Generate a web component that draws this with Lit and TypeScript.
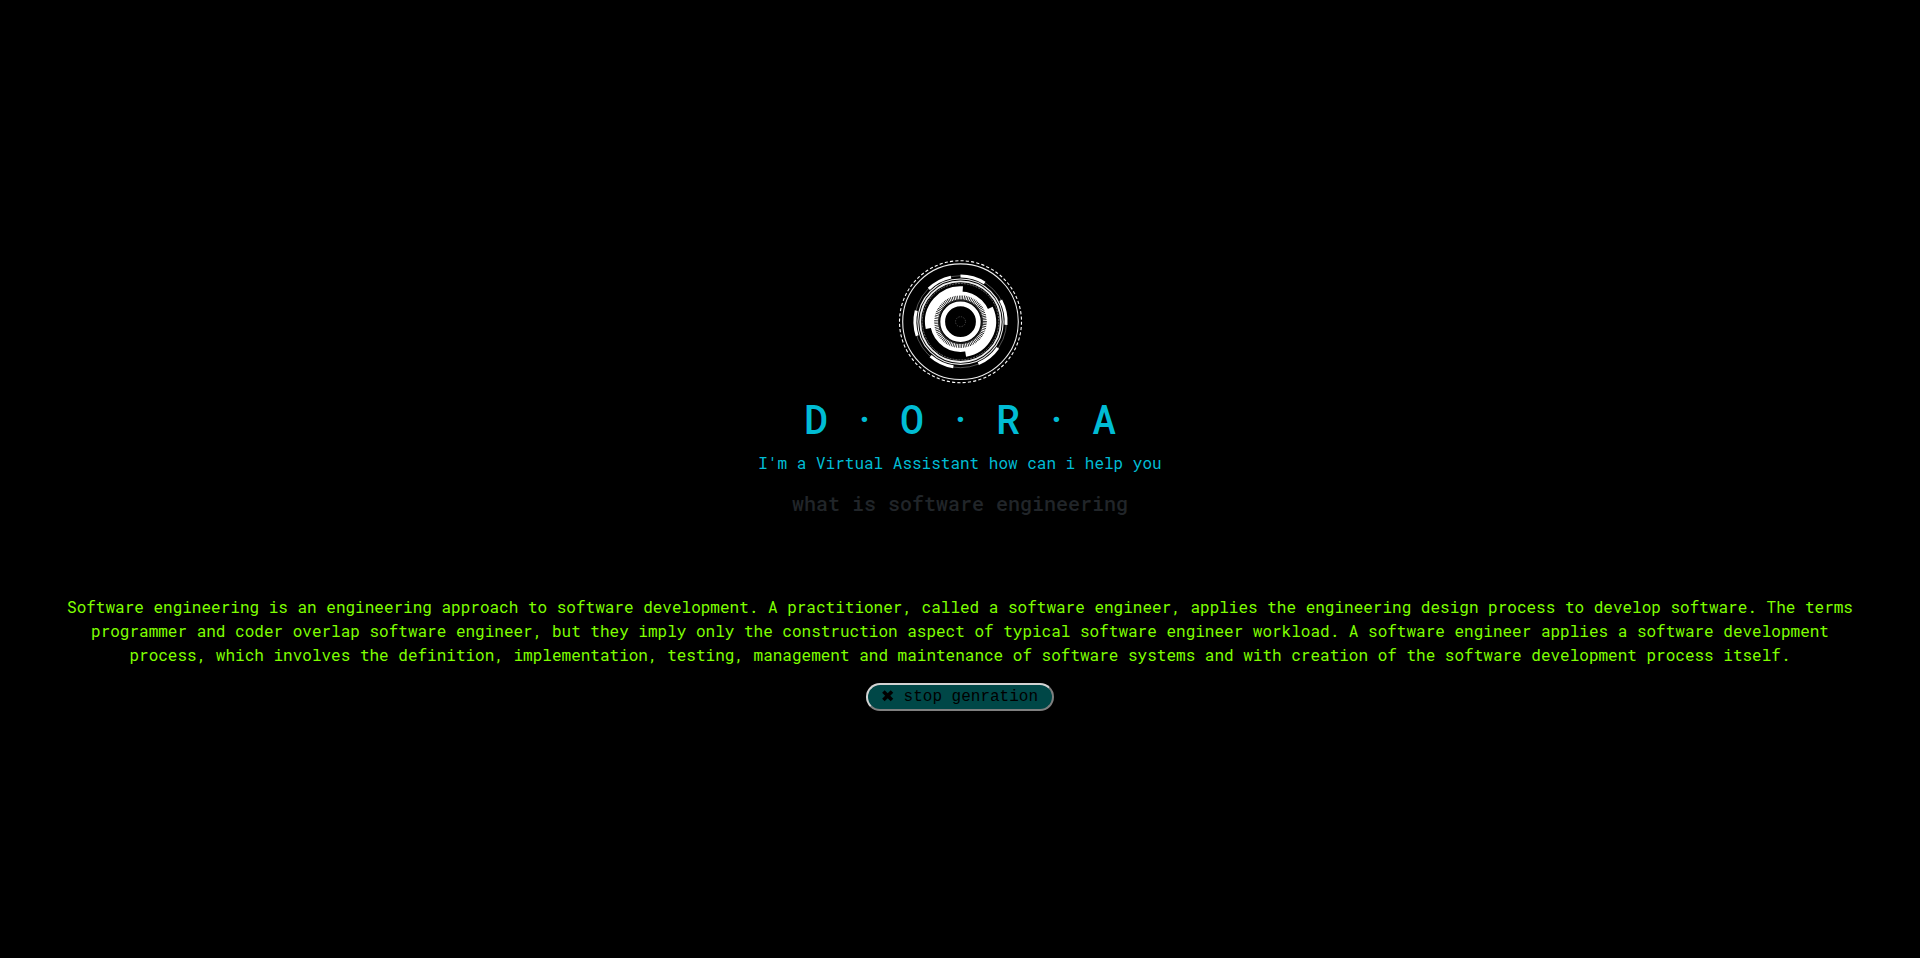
import { LitElement, css, html, svg } from "lit";
import { customElement, property } from "lit/decorators.js";

const point = (r: number, deg: number) => {
  const a = (deg * Math.PI) / 180;
  return `${(r * Math.cos(a)).toFixed(2)} ${(r * Math.sin(a)).toFixed(2)}`;
};

const arc = (r: number, from: number, to: number) =>
  `M${point(r, from)}A${r} ${r} 0 ${to - from > 180 ? 1 : 0} 1 ${point(r, to)}`;

const OUTER_BLOCKS = [
  [226, 258],
  [270, 302],
  [332, 364],
  [35, 67],
  [99, 131],
  [162, 194],
];

@customElement("reactor-logo")
export class ReactorLogo extends LitElement {
  static styles = css`
    :host {
      display: block;
    }
    .drawing {
      display: block;
      width: 148px;
      height: 148px;
      fill: none;
      stroke: #fff;
    }
  `;

  render() {
    return html`
      <svg class="drawing" viewBox="-74.5 -74.7 148 148" role="img" aria-label="Dora">
        <circle r="61" stroke-width="1.1" pathLength="216" stroke-dasharray="1.8 1.2" />
        <circle r="57.8" stroke-width="1.1" stroke="#eee" />
        <circle r="46" stroke-width="0.7" stroke="#777" />
        <circle r="42.7" stroke-width="1.1" stroke="#eee" />
        <circle r="40.3" stroke-width="1.8" stroke="#eee" />
        <circle r="38.2" stroke-width="0.8" stroke="#888" stroke-dasharray="2 1" />
        ${OUTER_BLOCKS.map(
          ([from, to]) => svg`<path d=${arc(45.6, from, to)} stroke-width="3" />`,
        )}
        <circle r="28.3" stroke-width="3.8" />
        <path d=${arc(31, 168, 274)} stroke-width="9" />
        <path d=${arc(31, 335, 441)} stroke-width="9" />
        <circle r="24.6" stroke-width="4.6" pathLength="360" stroke-dasharray="2.4 1.6" />
        <circle r="21.7" stroke-width="0.6" stroke="#444" />
        <circle r="17.8" stroke-width="4.8" />
        <circle r="5" stroke-width="0.8" stroke="#555" stroke-dasharray="1.3 1.3" />
      </svg>
    `;
  }
}

@customElement("app-root")
export class AppRoot extends LitElement {
  @property() question = "what is software engineering";
  @property() answer =
    "Software engineering is an engineering approach to software development. A practitioner, called a software engineer, applies the engineering design process to develop software. The terms programmer and coder overlap software engineer, but they imply only the construction aspect of typical software engineer workload. A software engineer applies a software development process, which involves the definition, implementation, testing, management and maintenance of software systems and with creation of the software development process itself.";

  static styles = css`
    :host {
      display: flex;
      flex-direction: column;
      align-items: center;
      justify-content: center;
      box-sizing: border-box;
      min-height: 100vh;
      padding: 24px 48px;
      background: #000;
      color: #00bcd4;
      font: 16px/24px "Roboto Mono", "Liberation Mono", monospace;
      text-align: center;
    }
    .title {
      margin: 0 0 8px;
      font-size: 40px;
      line-height: 48px;
      font-weight: 500;
    }
    .intro {
      margin: 0 0 16px;
    }
    .question {
      margin: 0 0 80px;
      color: #212529;
      font-size: 20px;
      line-height: 24px;
      font-weight: 500;
    }
    .answer {
      margin: 0 0 16px;
      color: #7fff00;
    }
    .stop {
      padding: 0 14px;
      border: 2px outset #d3d3d3;
      border-radius: 16px;
      background: #004747;
      color: #000;
      font: 16px/24px "Liberation Mono", monospace;
    }
    .cross {
      width: 12px;
      height: 12px;
      vertical-align: -1px;
      fill: none;
      stroke: currentColor;
      stroke-width: 3.6;
    }
  `;

  render() {
    return html`
      <reactor-logo></reactor-logo>
      <h1 class="title">D · O · R · A</h1>
      <p class="intro">I'm a Virtual Assistant how can i help you</p>
      <h5 class="question">${this.question}</h5>
      <p class="answer">${this.answer}</p>
      <button class="stop" type="button"><svg class="cross" viewBox="0 0 12 12" aria-hidden="true"><path d="M1.4 1.4L10 10M10 1.4L1.4 10" /></svg> stop genration</button>
    `;
  }
}
